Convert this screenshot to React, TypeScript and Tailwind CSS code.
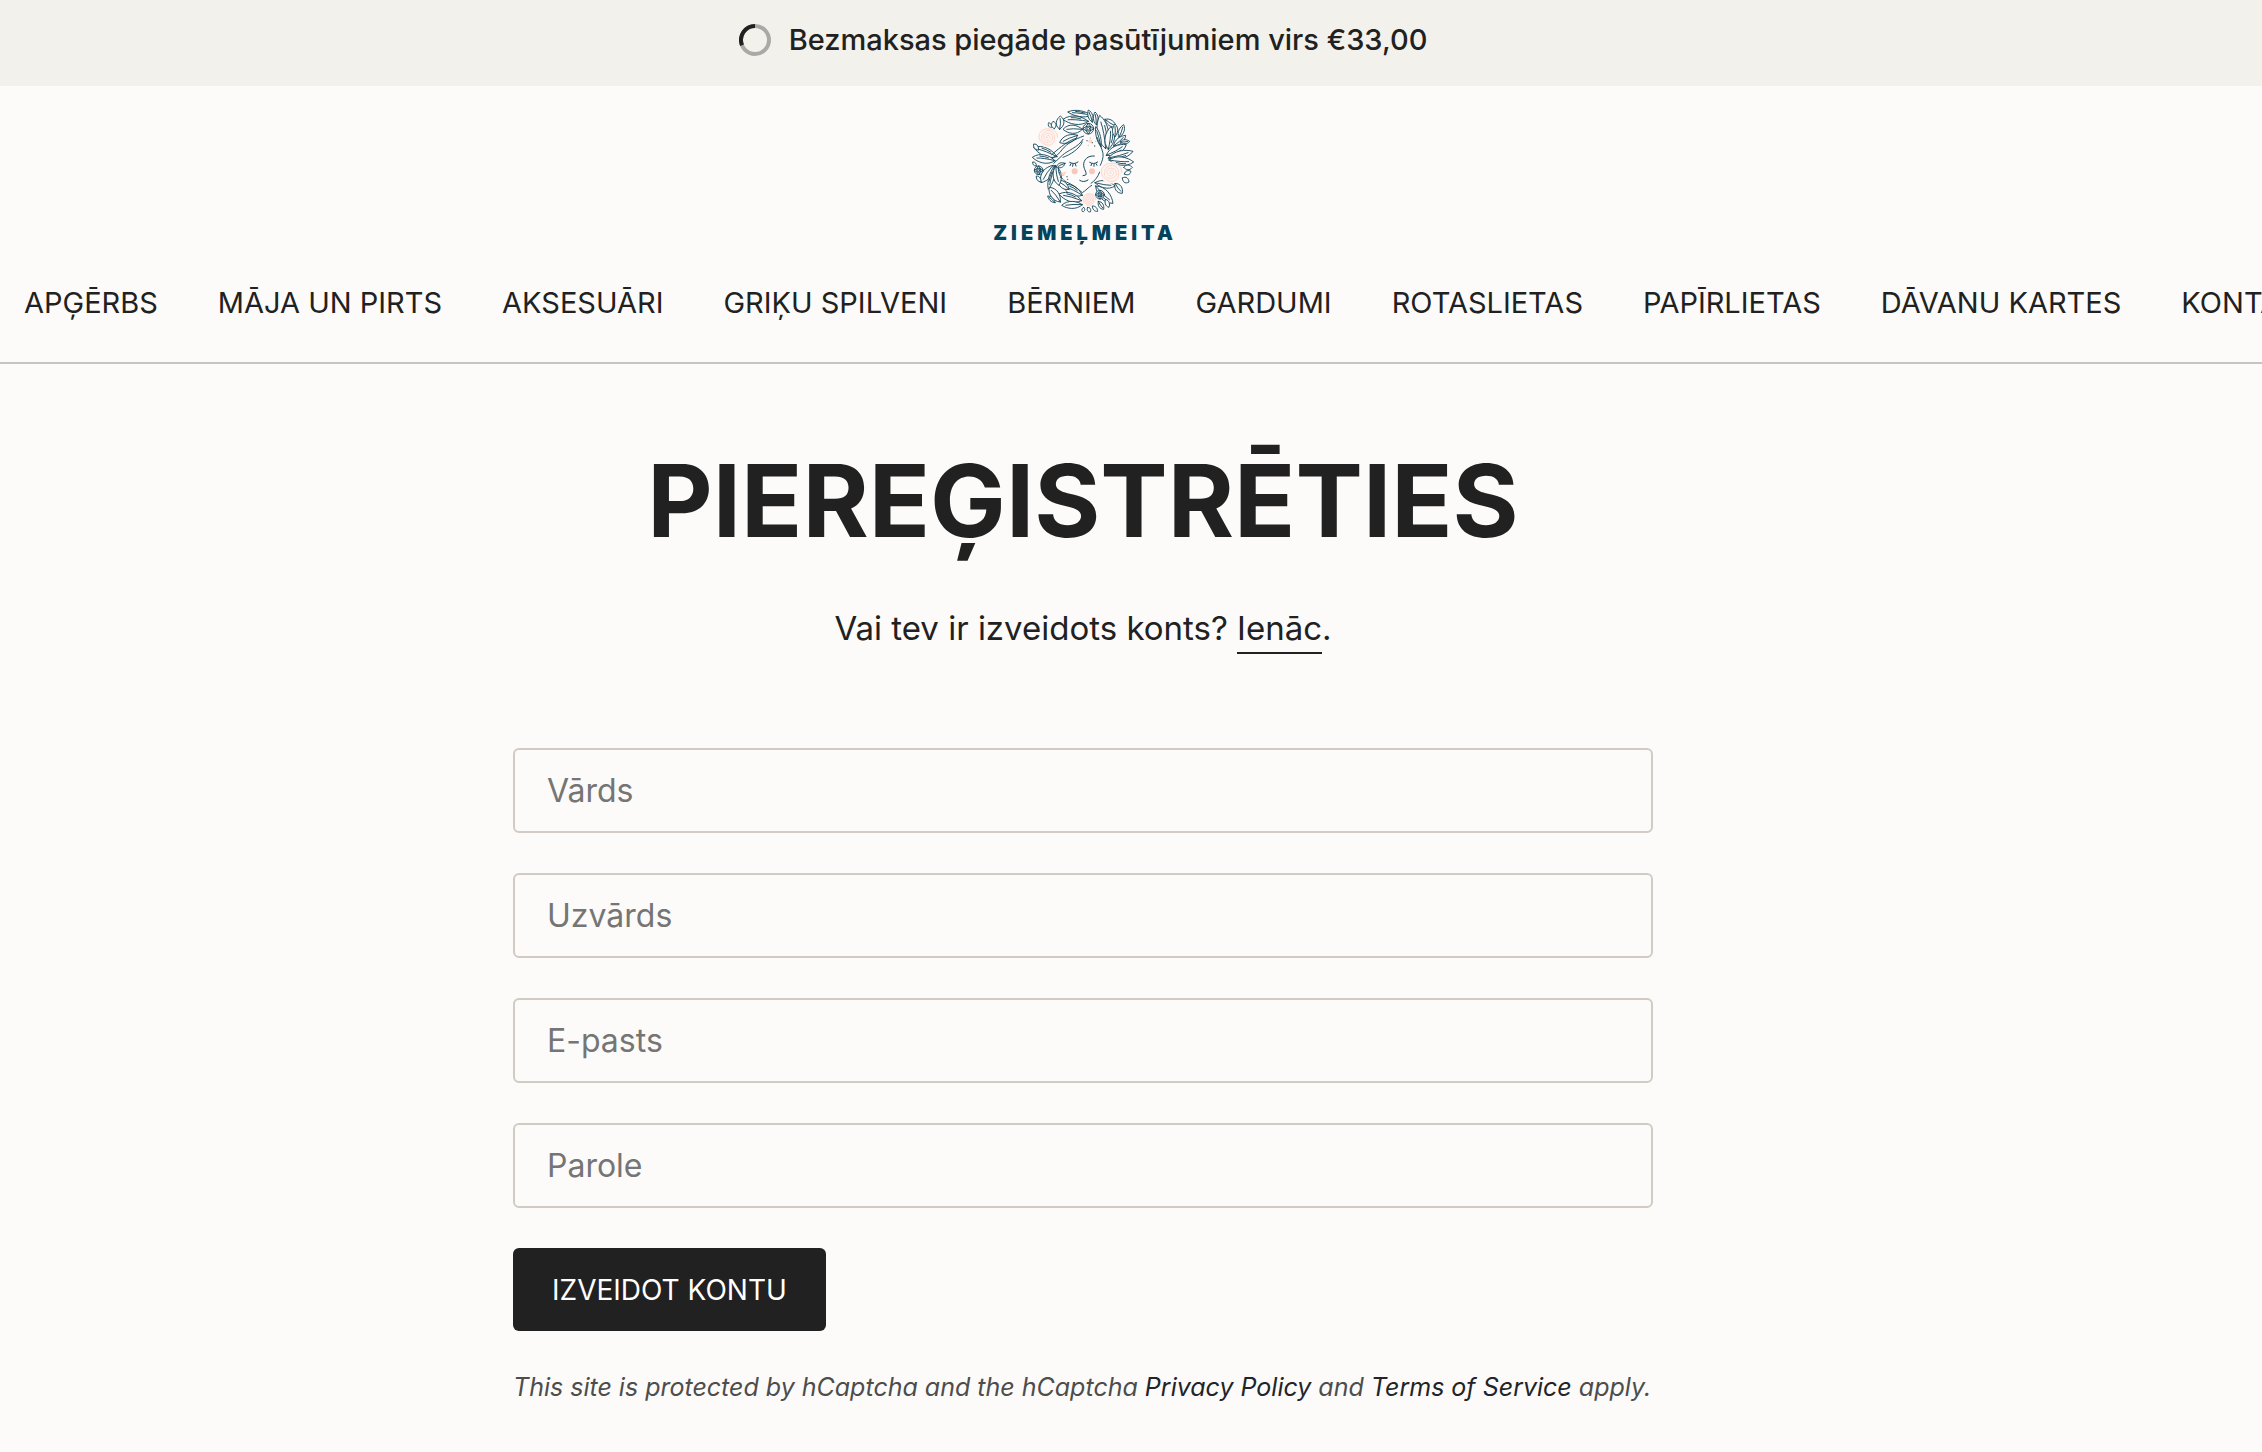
type Leaf = [number, number, number, number, number];

const LEAVES: Leaf[] = [
  // crown
  [332, 64, 260, 54, 10], [322, 82, 246, 76, 14], [304, 106, 246, 106, 14],
  [236, 106, 238, 66, 13], [220, 104, 216, 82, 8], [210, 102, 203, 86, 5], [334, 84, 322, 48, 8],
  [346, 92, 342, 54, 8], [290, 124, 236, 146, 13],
  // upper right
  [374, 164, 356, 64, 19], [382, 166, 390, 98, 16], [360, 158, 344, 98, 7],
  [372, 76, 406, 98, 10], [402, 128, 402, 90, 9], [414, 130, 428, 92, 9],
  [398, 156, 434, 124, 10], [418, 144, 446, 142, 7],
  // right
  [376, 184, 436, 152, 14], [382, 192, 456, 172, 13], [384, 198, 458, 204, 14],
  [428, 220, 454, 220, 8], [430, 240, 450, 232, 7], [424, 252, 444, 264, 9],
  [402, 268, 424, 298, 11],
  // lower right
  [342, 266, 402, 276, 12], [344, 276, 396, 328, 16], [374, 316, 384, 340, 7],
  [352, 322, 368, 346, 8],
  // bottom
  [334, 336, 350, 352, 6], [320, 340, 328, 354, 6], [308, 340, 306, 354, 5],
  [304, 304, 244, 274, 15], [302, 320, 234, 300, 14], [304, 332, 242, 334, 12],
  [264, 286, 230, 260, 11], [238, 324, 204, 280, 14], [222, 326, 200, 306, 6],
  // left
  [216, 214, 180, 266, 16], [222, 214, 202, 286, 9], [224, 216, 234, 274, 14],
  [228, 188, 158, 160, 14], [222, 200, 154, 190, 14], [172, 168, 158, 150, 7], [180, 264, 166, 246, 6],
  [252, 208, 226, 220, 8], [166, 216, 155, 204, 5],
];

function leafPath([x1, y1, x2, y2, w]: Leaf) {
  const dx = x2 - x1;
  const dy = y2 - y1;
  const l = Math.hypot(dx, dy);
  const nx = -dy / l;
  const ny = dx / l;
  const p = (t: number, o: number) =>
    `${(x1 + dx * t + nx * o).toFixed(1)},${(y1 + dy * t + ny * o).toFixed(1)}`;
  const outline = `M${p(0, 0)} C${p(0.25, w)} ${p(0.7, w * 1.4)} ${p(1, 0)} C${p(0.75, -w * 0.9)} ${p(0.3, -w * 1.4)} ${p(0, 0)}`;
  const rib = l > 26 ? ` M${p(0, 0)} Q${p(0.5, w * 0.25)} ${p(0.8, 0)}` : '';
  const vein = l > 64 ? ` M${p(0.3, w * 0.4)} Q${p(0.5, w * 0.65)} ${p(0.68, w * 0.5)}` : '';
  return outline + rib + vein;
}

function spiral(cx: number, cy: number, r: number, turns: number) {
  let d = '';
  const n = turns * 14;
  for (let i = 0; i <= n; i++) {
    const a = (i / 14) * Math.PI * 2;
    const k = (i / n) * r * (1 + 0.05 * Math.sin(a * 2.6));
    d += `${i ? 'L' : 'M'}${(cx + Math.cos(a) * k).toFixed(1)},${(cy + Math.sin(a) * k).toFixed(1)}`;
  }
  return d;
}

const ROSES: [number, number, number][] = [[200, 130, 29], [390, 236, 32], [324, 317, 20]];
const BERRIES: [number, number, number][] = [[322, 104, 16], [173, 229, 13], [357, 302, 13]];
const FRECKLES: [number, number][] = [[318, 140], [328, 132], [334, 146], [322, 154], [341, 156], [344, 142], [236, 236], [246, 244], [238, 250], [252, 236], [258, 248], [248, 257], [260, 256]];

function LogoMark() {
  return (
    <svg viewBox="150 42 312 315" className="h-[105px] w-[104px]" fill="none" stroke="#17495f" strokeWidth="2.8" strokeLinecap="round" strokeLinejoin="round" aria-hidden="true">
      {LEAVES.map((leaf, i) => (
        <path key={i} d={leafPath(leaf)} fill="#fcfbf9" />
      ))}
      {/* hair and face */}
      <path d="M308 126C282 136 258 148 244 166C236 178 226 186 214 192M306 136C292 160 258 170 244 184C236 192 226 200 218 208M304 144C294 166 268 182 246 190M288 132C264 138 240 158 212 182" />
      <path d="M348 130C354 148 362 160 366 178C368 192 362 204 358 214M356 234C350 250 342 260 330 268M232 222C232 240 240 254 256 264C272 270 286 280 304 296C314 290 322 280 332 274" />
      <path d="M340 186C320 184 307 198 308 214C309 228 319 236 314 243L306 245M296 259Q308 267 321 258" strokeWidth="3" />
      <path d="M266 205Q279 213 291 204M270 209L267 215M276 211L275 217M283 210L285 216M326 205Q338 213 350 204M332 209L330 215M339 211L339 217M345 209L348 214" strokeWidth="3" />
      {BERRIES.map(([x, y, r]) => (
        <g key={x}>
          <circle cx={x} cy={y} r={r} fill="#fcfbf9" />
          <path d={`M${x - r} ${y}Q${x} ${y - r} ${x + r} ${y}M${x - r} ${y}Q${x} ${y + r} ${x + r} ${y}M${x} ${y - r}Q${x - r} ${y} ${x} ${y + r}M${x} ${y - r}Q${x + r} ${y} ${x} ${y + r}`} />
          <circle cx={x} cy={y} r={r / 4} />
        </g>
      ))}
      {ROSES.map(([x, y, r]) => (
        <g key={x} stroke="#fbd3c9">
          <circle cx={x} cy={y} r={r + 1} fill="#fdf5f1" stroke="none" />
          <path d={spiral(x, y, r, 4)} strokeWidth="2.6" />
        </g>
      ))}
      <g fill="#fac6b9" stroke="none">
        <circle cx="281" cy="232" r="9" />
        <circle cx="333" cy="232" r="9" />
        <circle cx="328" cy="142" r="6" opacity="0.6" />
        <circle cx="246" cy="240" r="6" opacity="0.6" />
      </g>
      {FRECKLES.map(([x, y], i) => (
        <circle key={i} cx={x} cy={y} r="1.9" fill={i % 2 ? '#f3b09f' : '#4b4a4c'} stroke="none" />
      ))}
    </svg>
  );
}

function Spinner() {
  return (
    <svg viewBox="0 0 32 32" className="size-8" fill="none" strokeWidth="4" aria-hidden="true">
      <circle cx="16" cy="16" r="14" stroke="#a9a9a5" />
      <path d="M16 2A14 14 0 0 0 3 21.2" stroke="#212121" />
    </svg>
  );
}

const NAV = ['APĢĒRBS', 'MĀJA UN PIRTS', 'AKSESUĀRI', 'GRIĶU SPILVENI', 'BĒRNIEM', 'GARDUMI', 'ROTASLIETAS', 'PAPĪRLIETAS', 'DĀVANU KARTES', 'KONTAKTI'];

const FIELDS = [
  { id: 'first-name', label: 'Vārds', type: 'text' },
  { id: 'last-name', label: 'Uzvārds', type: 'text' },
  { id: 'email', label: 'E-pasts', type: 'email' },
  { id: 'password', label: 'Parole', type: 'password' },
];

export default function App() {
  return (
    <div className="min-h-screen overflow-hidden bg-[#fcfbf9] font-['Inter',sans-serif] text-[#212121]">
      <div className="flex items-center justify-center gap-[18px] bg-[#f3f1ec] pt-4 pr-24 pb-[22px] text-[29px] leading-[48px] font-medium">
        <Spinner />
        <p>Bezmaksas piegāde pasūtījumiem virs €33,00</p>
      </div>

      <header className="border-b-2 border-[#c5c4c2] pt-[22px] pb-[39px]">
        <div className="flex justify-center pr-24">
          <a href="#" className="flex flex-col items-center gap-[10px]">
            <LogoMark />
            <span className="pl-1 text-xl leading-5 font-black tracking-[4px] text-[#04435c]">ZIEMEĻMEITA</span>
          </a>
        </div>
        <nav className="mt-10">
          <ul className="flex gap-[60px] pl-6 text-[29px] leading-10 whitespace-nowrap">
            {NAV.map((item) => (
              <li key={item}>
                <a href="#">{item}</a>
              </li>
            ))}
          </ul>
        </nav>
      </header>

      <main className="pr-24 pb-11">
        <h1 className="mt-[86px] text-center text-[101px] leading-[100px] font-bold">PIEREĢISTRĒTIES</h1>
        <p className="mt-[54px] text-center text-[33px] leading-[48px]">
          Vai tev ir izveidots konts?{' '}
          <a href="#" className="inline-block border-b-2 border-[#212121]">Ienāc</a>.
        </p>
        <form className="mx-auto mt-[94px] flex w-full max-w-[1140px] flex-col items-start gap-10" onSubmit={(e) => e.preventDefault()}>
          {FIELDS.map((f) => (
            <input
              key={f.id}
              id={f.id}
              type={f.type}
              aria-label={f.label}
              placeholder={f.label}
              className="h-[85px] w-full rounded-md border-2 border-[#d1cbc3] bg-transparent px-8 text-[32px] placeholder:text-[#757575]"
            />
          ))}
          <button type="submit" className="h-[83px] rounded-md bg-[#212121] px-[39px] text-[28px] text-white">
            IZVEIDOT KONTU
          </button>
        </form>
        <p className="mx-auto mt-9 w-full max-w-[1140px] text-[25px] leading-10 whitespace-nowrap text-[#4d4d4d] italic">
          This site is protected by hCaptcha and the hCaptcha{' '}
          <a href="#" className="text-[#212529]">Privacy Policy</a> and{' '}
          <a href="#" className="text-[#212529]">Terms of Service</a> apply.
        </p>
      </main>
    </div>
  );
}
